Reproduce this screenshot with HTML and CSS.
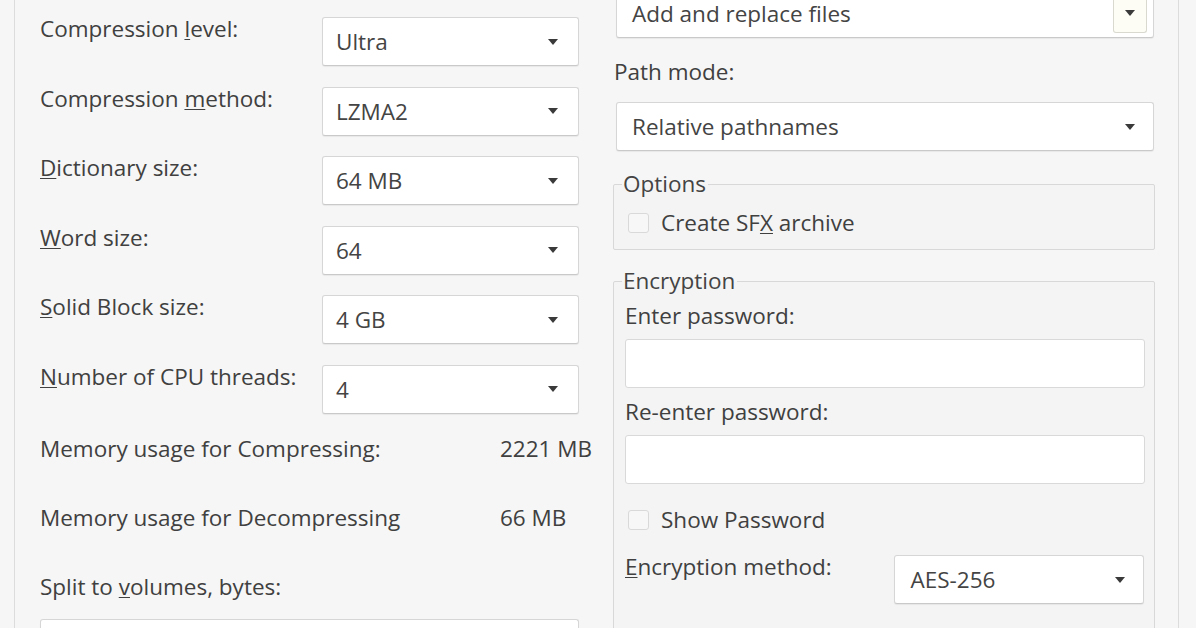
FILE: index.html
```html
<!DOCTYPE html>
<html>
<head>
<meta charset="utf-8">
<link rel="stylesheet" href="styles.css">
</head>
<body>
<div class="frame">
  <div class="left">
    <div class="grid">
      <div class="lbl">Compression <u>l</u>evel:</div>
      <div class="combo"><span>Ultra</span><i class="arrow"></i></div>
      <div class="lbl">Compression <u>m</u>ethod:</div>
      <div class="combo"><span>LZMA2</span><i class="arrow"></i></div>
      <div class="lbl"><u>D</u>ictionary size:</div>
      <div class="combo"><span>64 MB</span><i class="arrow"></i></div>
      <div class="lbl"><u>W</u>ord size:</div>
      <div class="combo"><span>64</span><i class="arrow"></i></div>
      <div class="lbl"><u>S</u>olid Block size:</div>
      <div class="combo"><span>4 GB</span><i class="arrow"></i></div>
      <div class="lbl"><u>N</u>umber of CPU threads:</div>
      <div class="combo"><span>4</span><i class="arrow"></i></div>
    </div>
    <div class="mem first"><span>Memory usage for Compressing:</span><span>2221 MB</span></div>
    <div class="mem"><span>Memory usage for Decompressing</span><span>66 MB</span></div>
    <div class="split-lbl">Split to <u>v</u>olumes, bytes:</div>
    <div class="combo split"><span></span><i class="arrow"></i></div>
  </div>
  <div class="right">
    <div class="combo rcombo"><span>Add and replace files</span><i class="btn"><i class="arrow"></i></i></div>
    <div class="path-lbl">Path mode:</div>
    <div class="combo rcombo"><span>Relative pathnames</span><i class="arrow"></i></div>
    <fieldset class="group options">
      <legend>Options</legend>
      <div class="check"><i class="box"></i><span>Create SF<u>X</u> archive</span></div>
    </fieldset>
    <fieldset class="group enc">
      <legend>Encryption</legend>
      <div class="plbl first">Enter password:</div>
      <div class="input"></div>
      <div class="plbl">Re-enter password:</div>
      <div class="input"></div>
      <div class="check show"><i class="box"></i><span>Show Password</span></div>
      <div class="method">
        <div class="mlbl"><u>E</u>ncryption method:</div>
        <div class="combo mcombo"><span>AES-256</span><i class="arrow"></i></div>
      </div>
    </fieldset>
  </div>
</div>
</body>
</html>
```
FILE: styles.css
```css
html, body {
  margin: 0;
  padding: 0;
}
body {
  width: 1196px;
  height: 628px;
  overflow: hidden;
  background: #f6f6f6;
  font-family: "Open Sans", "Noto Sans", sans-serif;
  font-size: 22.5px;
  color: #404040;
}
u {
  text-decoration: underline;
  text-underline-offset: 2px;
  text-decoration-thickness: 1px;
}
.frame {
  margin-left: 14px;
  width: 1165px;
  height: 700px;
  border-left: 1px solid #dcdcdc;
  border-right: 1px solid #dcdcdc;
  display: flex;
  padding-left: 25px;
  box-sizing: border-box;
  gap: 21px;
}
.left {
  width: 552px;
  display: flex;
  flex-direction: column;
  padding-top: 17px;
}
.grid {
  display: grid;
  grid-template-columns: 282px 257px;
  row-gap: 20.5px;
}
.lbl {
  line-height: 24px;
  align-self: start;
  white-space: nowrap;
}
.combo {
  position: relative;
  height: 49px;
  box-sizing: border-box;
  background: #ffffff;
  border: 1px solid #d6d6d6;
  border-bottom-color: #c9c9c9;
  border-radius: 3px;
  box-shadow: 0 1px 1px rgba(0, 0, 0, 0.06);
  display: flex;
  align-items: center;
  padding-left: 13px;
  color: #444444;
}
.combo > span {
  flex: 1;
  white-space: nowrap;
}
.arrow {
  display: block;
  width: 0;
  height: 0;
  border-left: 5px solid transparent;
  border-right: 5px solid transparent;
  border-top: 6px solid #3a3a3a;
  margin-right: 20px;
}
.mem {
  display: grid;
  grid-template-columns: 460px auto;
  line-height: 24px;
  margin-bottom: 45px;
  white-space: nowrap;
}
.mem.first {
  margin-top: 23px;
}
.split-lbl {
  line-height: 24px;
  margin-top: 0;
}
.combo.split {
  margin-top: 20px;
  width: 539px;
}
.right {
  width: 542px;
  display: flex;
  flex-direction: column;
  margin-top: -11px;
}
.rcombo {
  margin-left: 3px;
  width: 538px;
  padding-left: 15px;
}
.rcombo .arrow {
  margin-right: 18px;
}
.btn {
  display: flex;
  align-items: center;
  justify-content: center;
  width: 34px;
  height: 43px;
  align-self: flex-start;
  margin-top: 0;
  margin-right: 6px;
  box-sizing: border-box;
  border: 1px solid #d9d9d0;
  border-top: none;
  border-radius: 0 0 3px 3px;
  background: #fdfdf6;
}
.btn .arrow {
  margin: 4px 0 0 0;
}
.path-lbl {
  line-height: 24px;
  margin-top: 22px;
  margin-left: 1px;
}
.path-lbl + .combo {
  margin-top: 18px;
}
.group {
  margin: 0;
  border: 1px solid #d8d8d8;
  border-radius: 2px;
  padding: 0 10px 0 11px;
  background: #f4f4f4;
  min-width: 0;
}
.group legend {
  padding: 0 2px 0 1px;
  margin-left: -3px;
  line-height: 24px;
  color: #444444;
}
.options {
  margin-top: 21px;
  padding-top: 15px;
  padding-bottom: 14px;
}
.check {
  display: flex;
  align-items: center;
  line-height: 24px;
  gap: 12px;
}
.box {
  display: block;
  width: 21px;
  height: 20px;
  box-sizing: border-box;
  border: 1px solid #d9d9d9;
  border-radius: 3px;
  background: #f7f7f7;
  margin-left: 3px;
}
.enc {
  margin-top: 19px;
  padding-top: 11px;
  padding-bottom: 60px;
}
.plbl {
  line-height: 24px;
  margin-top: 12px;
}
.plbl.first {
  margin-top: 0;
}
.input {
  margin-top: 11px;
  height: 49px;
  box-sizing: border-box;
  background: #ffffff;
  border: 1px solid #d9d9d9;
  border-radius: 3px;
  width: 520px;
}
.check.show {
  margin-top: 24px;
}
.method {
  display: flex;
  margin-top: 23px;
}
.mlbl {
  width: 270px;
  line-height: 24px;
  white-space: nowrap;
}
.mcombo {
  width: 250px;
  padding-left: 15px;
}
.mcombo .arrow {
  margin-right: 18px;
}
```
